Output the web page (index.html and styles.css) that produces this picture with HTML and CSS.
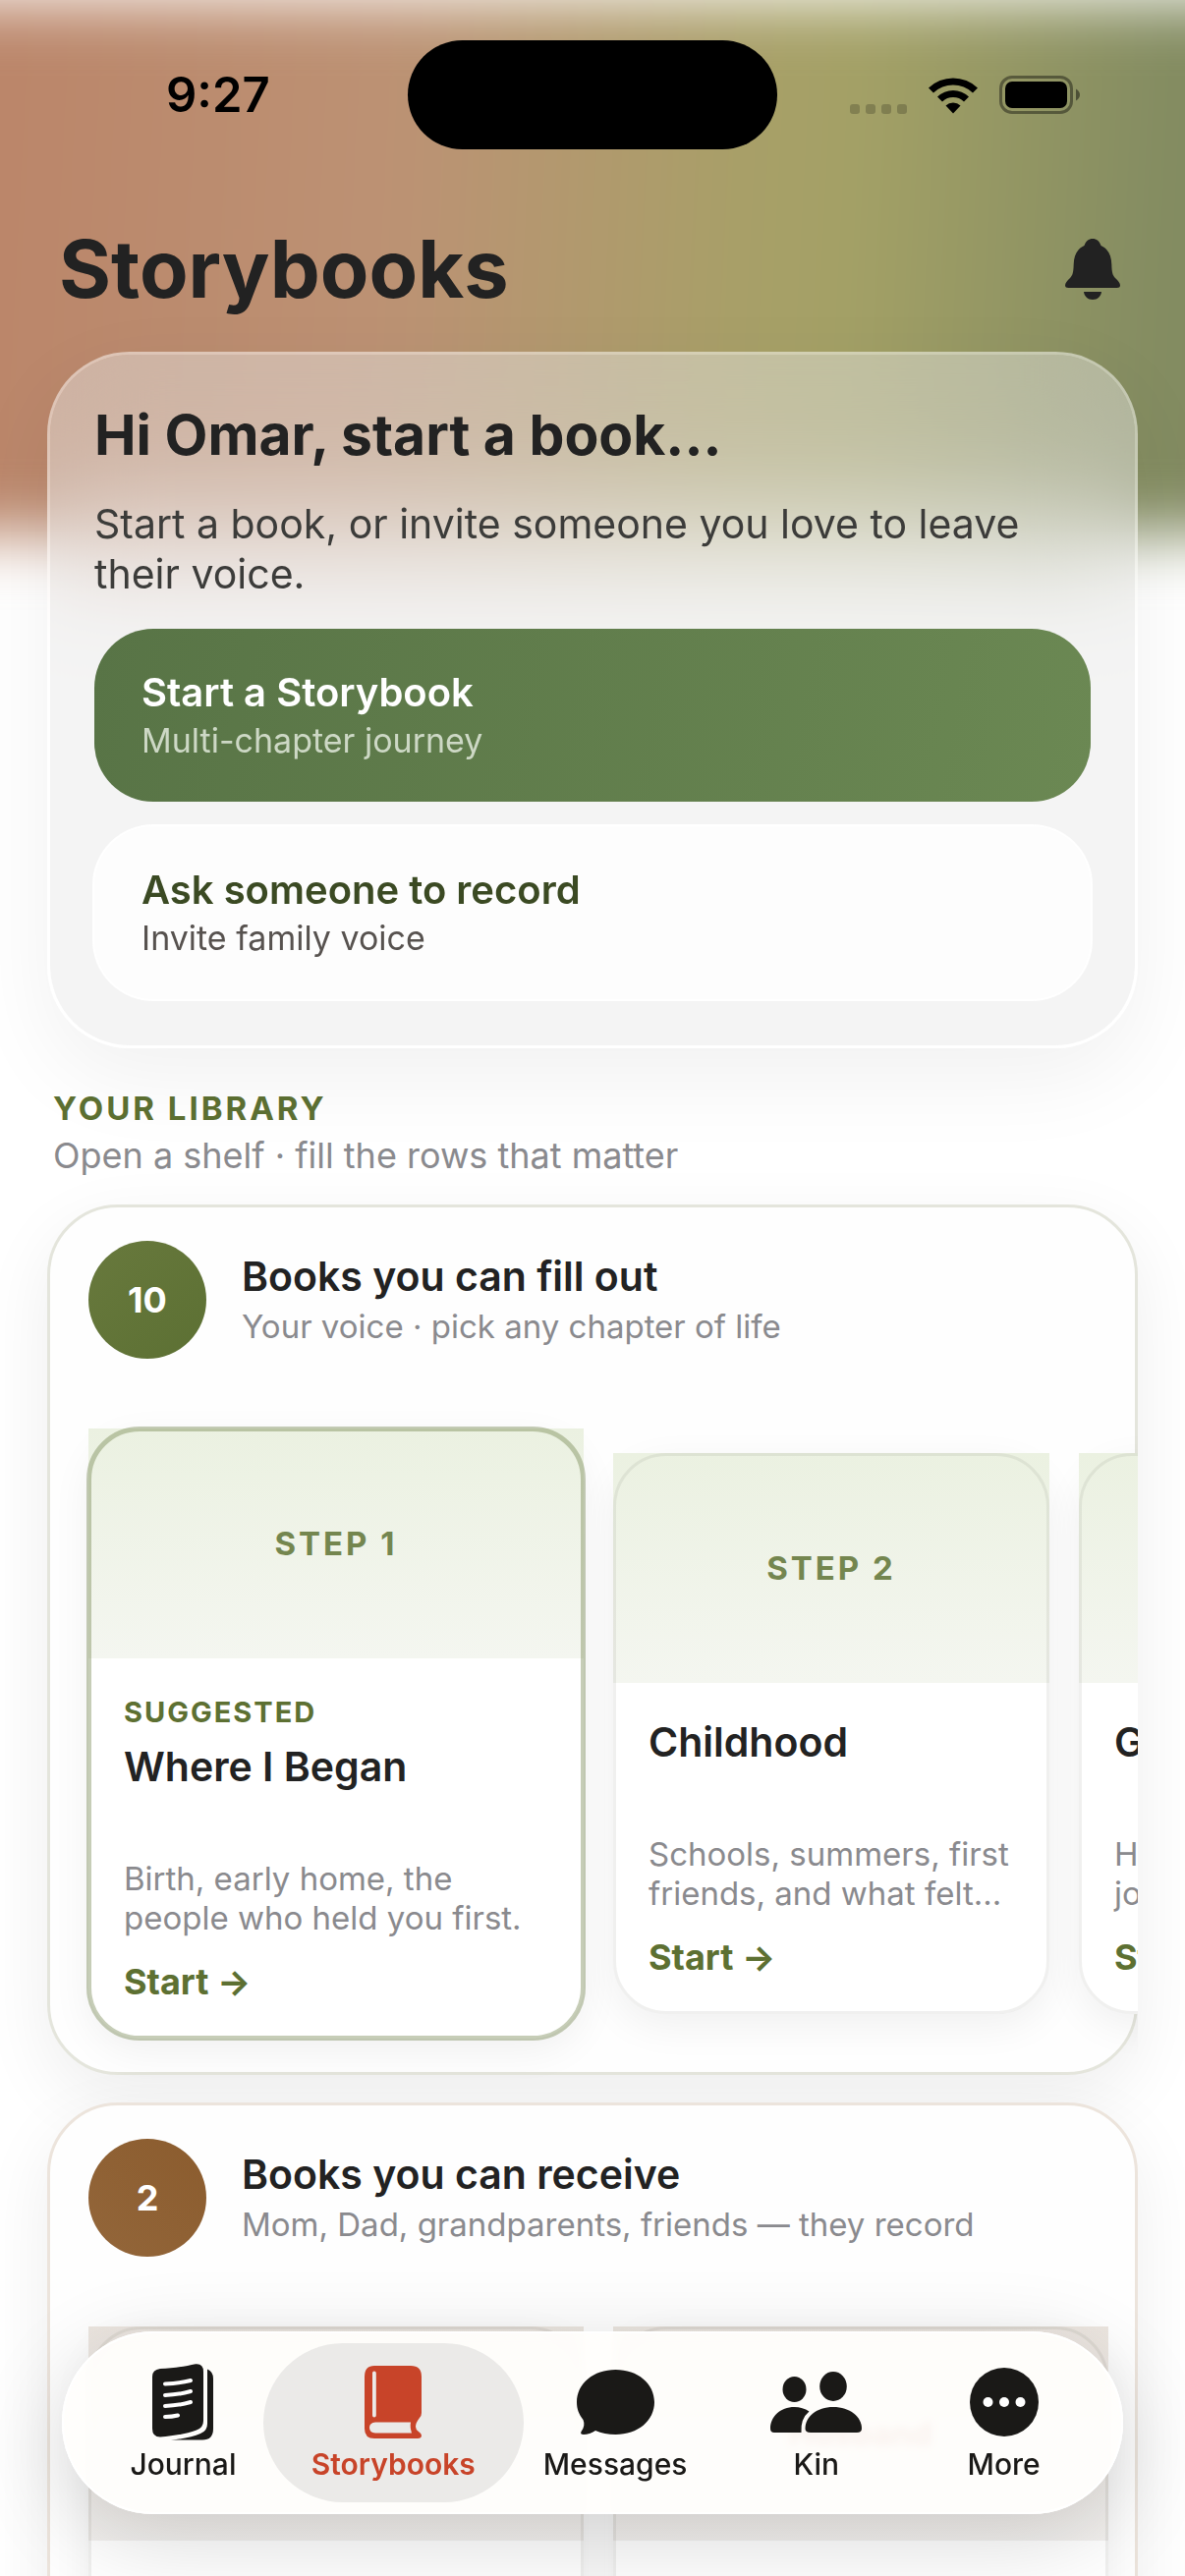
FILE: index.html
```html
<!DOCTYPE html>
<html lang="en">
<head>
  <meta charset="UTF-8">
  <meta name="viewport" content="width=device-width, initial-scale=1.0">
  <title>Storybooks</title>
  <link rel="stylesheet" href="styles.css">
</head>
<body>
  <div class="screen">
    <div class="glow"></div>

    <div class="status">
      <div class="time">9:27</div>
      <div class="island"></div>
      <div class="status-icons">
        <div class="signal"><i></i><i></i><i></i><i></i></div>
        <svg class="wifi" width="52" height="38" viewBox="0 0 52 38">
          <path d="M1 11.500A36 36 0 0 1 51 11.500L46 16.500A29 29 0 0 0 6 16.500Z"/>
          <path d="M10 20.500A23 23 0 0 1 42 20.500L37 25.500A16 16 0 0 0 15 25.500Z"/>
          <path d="M18.500 29.500A11 11 0 0 1 33.500 29.500L26 37.500Z"/>
        </svg>
        <svg width="83" height="39" viewBox="0 0 83 39">
          <rect x="1.500" y="1.500" width="72" height="36" rx="11.500" fill="none" stroke="#000" stroke-opacity=".4" stroke-width="3"/>
          <rect x="6" y="6" width="63" height="27" rx="7"/>
          <path d="M78 13.500Q82 16 82 19.500T78 25.500Z" fill-opacity=".45"/>
        </svg>
      </div>
    </div>

    <header class="top">
      <h1>Storybooks</h1>
      <button class="bell" aria-label="Notifications">
        <svg width="56" height="62" viewBox="0 0 56 62">
          <path d="M28 0C32 0 35 2.500 36.500 7C44 10.500 47 17 47.300 26C47.500 35 48.500 37 51 40C54 43 56 45 56 47.500Q56 50 52.500 50H3.500Q0 50 0 47.500C0 45 2 43 5 40C7.500 37 8.500 35 8.700 26C9 17 12 10.500 19.500 7C21 2.500 24 0 28 0Z"/>
          <path d="M19 54H37C36.500 58.500 33 62 28 62S19.500 58.500 19 54Z"/>
        </svg>
      </button>
    </header>

    <main>
      <section class="hero">
        <h2>Hi Omar, start a book...</h2>
        <p>Start a book, or invite someone you love to leave their voice.</p>
        <button class="action primary">
          <span class="action-title">Start a Storybook</span>
          <span class="action-sub">Multi-chapter journey</span>
        </button>
        <button class="action secondary">
          <span class="action-title">Ask someone to record</span>
          <span class="action-sub">Invite family voice</span>
        </button>
      </section>

      <div class="library">
        <h3>YOUR LIBRARY</h3>
        <p>Open a shelf · fill the rows that matter</p>
      </div>

      <section class="shelf">
        <div class="shelf-head">
          <div class="count">10</div>
          <div>
            <h4>Books you can fill out</h4>
            <p>Your voice · pick any chapter of life</p>
          </div>
        </div>
        <div class="books">
          <article class="book featured">
            <div class="cover">STEP 1</div>
            <div class="info">
              <div class="tag">SUGGESTED</div>
              <h5>Where I Began</h5>
              <p>Birth, early home, the people who held you first.</p>
              <a href="#">Start →</a>
            </div>
          </article>
          <article class="book">
            <div class="cover">STEP 2</div>
            <div class="info">
              <h5>Childhood</h5>
              <p>Schools, summers, first friends, and what felt...</p>
              <a href="#">Start →</a>
            </div>
          </article>
          <article class="book">
            <div class="cover"></div>
            <div class="info">
              <h5>Growing Up</h5>
              <p>Home, school, first<br>jobs, and big turns.</p>
              <a href="#">Start →</a>
            </div>
          </article>
        </div>
      </section>

      <section class="shelf receive">
        <div class="shelf-head">
          <div class="count">2</div>
          <div>
            <h4>Books you can receive</h4>
            <p>Mom, Dad, grandparents, friends — they record</p>
          </div>
        </div>
        <div class="books">
          <article class="book wide"><div class="cover">Mom</div><div class="info"></div></article>
          <article class="book wide"><div class="cover">Husband</div><div class="info"></div></article>
        </div>
      </section>
    </main>

    <nav class="tabs">
      <a href="#">
        <svg width="62" height="78" viewBox="0 0 62 78">
          <path d="M8 5C22 4.500 34 2.500 44 .3Q52 -.500 52 8V58Q52 65 45 67.500C34 71.500 22 73.500 8 74.500Q0 74.500 0 66V13Q0 6 8 5Z"/>
          <path d="M56 5.500Q62 8 62 15V66Q62 77.500 51 77.500H19C32 76.500 42 74 49 71Q56 68.500 56 61Z"/>
          <path class="lines" d="M13 20.500Q27 20 39 17M13 32Q27 31.500 39 28M13 43Q27 42.500 39 39M13 54Q20 54 26 52.500"/>
        </svg>
        <span>Journal</span>
      </a>
      <a href="#" class="active">
        <svg width="58" height="74" viewBox="0 0 58 74">
          <path fill-rule="evenodd" d="M10 0H47Q58 0 58 11V48Q58 51 56 53Q52 58 52 62Q52 65 55 67Q58 69 58 71Q58 74 54 74H10Q0 74 0 64V11Q0 0 10 0ZM11 57.500H47Q46 62 48 68.500H11Q5 68 5 63Q5 58 11 57.500ZM8 7.500V50.500A1.900 1.900 0 0 0 11.800 50.500V7.500A1.900 1.900 0 0 0 8 7.500Z"/>
        </svg>
        <span>Storybooks</span>
      </a>
      <a href="#">
        <svg width="79" height="66" viewBox="0 0 79 66">
          <path d="M39.500 0C62 0 79 14 79 33S62 66 39.500 66C32 66 25 64.500 19 62Q13 66 7 66Q3 66 4.500 63Q9 57 6.500 51C2 45 0 40 0 33C0 14 17 0 39.500 0Z"/>
        </svg>
        <span>Messages</span>
      </a>
      <a href="#">
        <svg width="93" height="62" viewBox="0 0 93 62">
          <ellipse cx="24.500" cy="18" rx="12" ry="13"/>
          <ellipse cx="64" cy="15" rx="13.800" ry="15"/>
          <path d="M24.500 36Q33 36 39.500 40.500Q30.500 48 31.500 62H4Q0 62 0 58C0 46 10 36 24.500 36Z"/>
          <path d="M64 36C81 36 93 46 93 58Q93 62 88 62H41Q35.500 62 35.500 58C35.500 46 47 36 64 36Z"/>
        </svg>
        <span>Kin</span>
      </a>
      <a href="#">
        <svg width="70" height="70" viewBox="0 0 70 70">
          <circle cx="35" cy="35" r="35"/>
          <g fill="#fff"><circle cx="18.500" cy="35" r="5"/><circle cx="35" cy="35" r="5"/><circle cx="51.500" cy="35" r="5"/></g>
        </svg>
        <span>More</span>
      </a>
    </nav>
  </div>
</body>
</html>
```
FILE: styles.css
```css
* {
  box-sizing: border-box;
  margin: 0;
  padding: 0;
}
body {
  background: #fff;
  color: #222;
  font-family: Inter, "Liberation Sans", sans-serif;
}
button {
  border: none;
  background: none;
  font-family: inherit;
  cursor: pointer;
}
a {
  text-decoration: none;
}
.screen {
  position: relative;
  height: 100vh;
  overflow: hidden;
}
.glow {
  position: absolute;
  top: 0;
  left: -90px;
  right: -90px;
  height: 544px;
  background: linear-gradient(93deg, #bb866a 8%, #bc9274 36%, #a89f68 60%, #a4a166 68%, #828b61 92%);
  filter: blur(32px);
}

/* status bar */
.status {
  position: relative;
  display: grid;
  grid-template-columns: 1fr 376px 1fr;
  align-items: center;
  height: 193px;
}
.time {
  padding-left: 169px;
  font-size: 49px;
  font-weight: 600;
  line-height: 60px;
  color: #000;
}
.island {
  height: 111px;
  border-radius: 56px;
  background: #000;
}
.status-icons {
  display: flex;
  align-items: center;
  justify-content: flex-end;
  gap: 21px;
  padding-right: 106px;
}
.signal {
  display: flex;
  gap: 6px;
  padding-top: 28px;
}
.signal i {
  width: 10px;
  height: 10px;
  border-radius: 3px;
  background: rgba(0, 0, 0, 0.2);
}

.top {
  position: relative;
  display: flex;
  align-items: center;
  justify-content: space-between;
  padding: 31px 66px 34px 60px;
}
h1 {
  font-size: 81px;
  font-weight: 700;
  line-height: 100px;
}
.bell svg {
  display: block;
  fill: #222;
}

main {
  position: relative;
  padding: 0 48px;
}
.hero {
  padding: 46px 45px 47px;
  border: 3px solid rgba(255, 255, 255, 0.5);
  border-radius: 84px;
  background: rgba(230, 230, 230, 0.45);
  background-clip: padding-box;
  backdrop-filter: blur(54px);
  box-shadow: 0 30px 90px rgba(0, 0, 0, 0.06);
}
.hero h2 {
  font-size: 57px;
  font-weight: 700;
  line-height: 72px;
  margin-bottom: 29px;
}
.hero p {
  font-size: 41px;
  line-height: 51px;
  color: #3c3c3a;
  margin-bottom: 30px;
}
.action {
  display: flex;
  flex-direction: column;
  gap: 3px;
  width: 100%;
  padding: 41px 48px 40px;
  border-radius: 60px;
  text-align: left;
}
.action-title {
  font-size: 40px;
  font-weight: 600;
  line-height: 48px;
}
.action-sub {
  font-size: 34px;
  line-height: 44px;
}
.primary {
  background: linear-gradient(100deg, #587446, #6b8853);
  color: #fff;
}
.primary .action-sub {
  color: #cdd8c5;
}
.secondary {
  margin-top: 25px;
  background: #fdfdfd;
  box-shadow: 0 0 0 2px #fff;
  color: #3b4a23;
}
.secondary .action-sub {
  color: #57524f;
}

.library {
  padding: 41px 6px 27px;
}
.library h3 {
  font-size: 33px;
  font-weight: 700;
  line-height: 40px;
  letter-spacing: 3px;
  color: #5d7032;
  margin-bottom: 5px;
}
.library p {
  font-size: 36px;
  line-height: 46px;
  color: #8a8a8e;
}

/* shelves */
.shelf {
  padding: 34px 0 34px 39px;
  border: 3px solid #e4e5dc;
  border-radius: 72px;
  background: #fefefe;
  box-shadow: 0 24px 72px rgba(0, 0, 0, 0.07);
}
.shelf-head {
  display: flex;
  align-items: center;
  gap: 36px;
  margin-bottom: 71px;
}
.count {
  display: flex;
  align-items: center;
  justify-content: center;
  width: 120px;
  height: 120px;
  border-radius: 50%;
  background: linear-gradient(135deg, #68793d, #5c7033);
  color: #fff;
  font-size: 36px;
  font-weight: 700;
}
h4 {
  font-size: 41px;
  font-weight: 600;
  line-height: 50px;
  margin-bottom: 4px;
}
.shelf-head p {
  font-size: 33px;
  line-height: 44px;
  color: #8a8a8e;
}
.books {
  display: flex;
  align-items: center;
  gap: 30px;
  margin-left: -39px;
  margin-right: -3px;
  padding-left: 39px;
  overflow-x: clip;
  overflow-y: visible;
}
.book {
  position: relative;
  flex: none;
  width: 444px;
  border-radius: 54px;
  background: #fff;
  box-shadow: 0 12px 42px rgba(0, 0, 0, 0.06);
}
.book::after {
  content: "";
  position: absolute;
  inset: 0;
  border: 3px solid rgba(60, 70, 50, 0.08);
  border-radius: 54px;
}
.featured {
  width: 504px;
}
.featured::after {
  inset: -2px;
  border: 5px solid rgba(93, 112, 50, 0.35);
}
.cover {
  display: flex;
  align-items: center;
  justify-content: center;
  height: 234px;
  background: linear-gradient(#ebf1e1, #f4f6f0);
  color: #74864f;
  font-size: 33px;
  font-weight: 700;
  letter-spacing: 3px;
}
.info {
  padding: 35px 36px 36px;
}
.tag {
  font-size: 29px;
  font-weight: 700;
  line-height: 40px;
  letter-spacing: 2px;
  color: #5d7032;
  margin-bottom: 10px;
}
h5 {
  min-height: 100px;
  font-size: 41px;
  font-weight: 600;
  line-height: 50px;
  margin-bottom: 19px;
}
.info p {
  font-size: 33px;
  line-height: 40px;
  color: #8a8a8e;
  margin-bottom: 23px;
}
.info a {
  display: block;
  position: relative;
  z-index: 1;
  font-size: 36px;
  font-weight: 700;
  line-height: 44px;
  color: #5d7032;
}

.receive {
  margin-top: 28px;
  border-color: #ece4dc;
}
.receive .count {
  background: linear-gradient(45deg, #93663a, #8b5c2e);
}
.wide {
  width: 504px;
}
.wide .cover {
  height: 218px;
  background: linear-gradient(#ebe5df, #f3f1ef);
  color: #b4553c;
  letter-spacing: 0;
}
.wide .info {
  height: 380px;
}

/* tab bar */
.tabs {
  position: fixed;
  left: 63px;
  right: 63px;
  bottom: 63px;
  display: grid;
  grid-template-columns: 222fr 204fr 246fr 162fr 218fr;
  padding: 12px;
  border-radius: 93px;
  background: rgba(255, 254, 252, 0.93);
  backdrop-filter: blur(4px);
  box-shadow: 0 24px 90px rgba(0, 0, 0, 0.16), inset 0 0 0 2px #fff;
}
.tabs a {
  position: relative;
  display: flex;
  flex-direction: column;
  align-items: center;
  height: 162px;
  color: #1a1917;
  fill: #1a1917;
  font-size: 30px;
  font-weight: 500;
  line-height: 36px;
}
.tabs svg {
  position: relative;
  height: 120px;
}
.tabs span {
  position: relative;
  margin-top: -15px;
}
.tabs .lines {
  fill: none;
  stroke: #fff;
  stroke-width: 4;
  stroke-linecap: round;
}
.tabs .active {
  color: #c84429;
  fill: #c84429;
  font-weight: 600;
}
.tabs .active::before {
  content: "";
  position: absolute;
  inset: 0 -30px;
  border-radius: 81px;
  background: #ebeae8;
}
```
